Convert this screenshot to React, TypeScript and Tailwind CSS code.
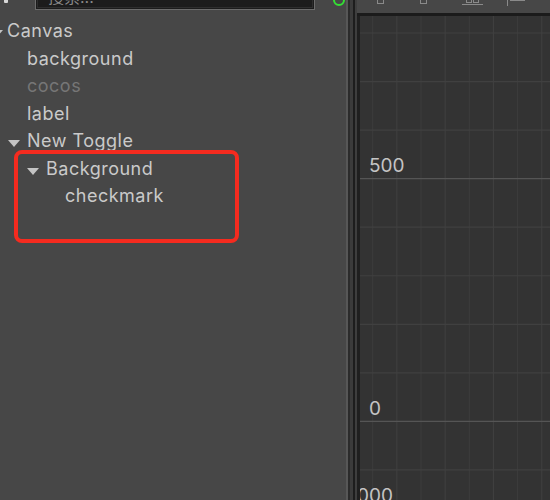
import React from "react";

const rows: { label: string; indent: number; arrow?: boolean; dim?: boolean }[] = [
  { label: "Canvas", indent: 0, arrow: true },
  { label: "background", indent: 1 },
  { label: "cocos", indent: 1, dim: true },
  { label: "label", indent: 1 },
  { label: "New Toggle", indent: 1, arrow: true },
  { label: "Background", indent: 2, arrow: true },
  { label: "checkmark", indent: 3 },
];

const indentClass = ["pl-[7px]", "pl-[27px]", "pl-[46px]", "pl-[65px]"];

function Arrow({ root }: { root?: boolean }) {
  return (
    <svg
      width="12"
      height="8"
      viewBox="0 0 12 8"
      className={`absolute top-[10px] ${root ? "left-[-16px]" : "left-[-19px]"}`}
    >
      <path d="M0 0 L12 0 L6 7 Z" fill="#c4c4c4" />
    </svg>
  );
}

function Grid() {
  const hs: number[] = [];
  for (let i = 0; i < 10; i++) hs.push(17 + i * 48.55);
  const vs: number[] = [];
  for (let i = 0; i < 9; i++) vs.push(12.7 + i * 24.15);
  return (
    <svg className="absolute inset-0" width="193" height="485">
      {vs.map((x, i) => (
        <line key={"v" + i} x1={x} y1={0} x2={x} y2={485} stroke={i % 2 === 0 ? "#3d3d3d" : "#404040"} strokeWidth="1" />
      ))}
      {hs.map((y, i) => (
        <line key={"h" + i} x1={0} y1={y} x2={193} y2={y} stroke={i === 3 || i === 8 ? "#555555" : "#404040"} strokeWidth="1.2" />
      ))}
    </svg>
  );
}

export default function App() {
  return (
    <div
      className="w-[550px] h-[500px] flex overflow-hidden bg-[#474747]"
      style={{ fontFamily: "Inter, 'Noto Sans CJK SC', sans-serif" }}
    >
      {/* Left hierarchy panel */}
      <div className="w-[346px] shrink-0 flex flex-col bg-[#474747] relative">
        <div className="h-[10px] relative overflow-hidden">
          <div className="absolute left-[4px] top-[-6px] w-[4px] h-[9px] bg-[#d8d8d8] rounded-[1px]" />
          <div className="absolute left-[35px] top-[-17px] w-[280px] h-[27px] border border-[#6c6c6c] bg-[#1c1c1c] flex items-center pl-[12px]">
            <div className="absolute inset-[1px] border border-[#2e2e2e]" />
            <span className="text-[16px] text-[#8a8a8a] leading-none">搜索...</span>
          </div>
          <svg className="absolute left-[332px] top-[-7px]" width="14" height="14" viewBox="0 0 14 14">
            <circle cx="7" cy="7" r="5" fill="none" stroke="#34e034" strokeWidth="2" />
          </svg>
        </div>
        <div className="pt-[7px] flex flex-col">
          {rows.map((r, i) => (
            <div
              key={i}
              className={`h-[27.5px] leading-[27px] text-[18px] tracking-[0.5px] whitespace-nowrap ${indentClass[r.indent]} ${
                r.dim ? "text-[#767676]" : "text-[#cacaca]"
              }`}
            >
              <span className="relative">
                {r.arrow && <Arrow root={r.indent === 0} />}
                {r.label}
              </span>
            </div>
          ))}
        </div>
        <div className="absolute left-[14px] top-[150px] w-[225px] h-[93px] border-[4px] border-[#f52b1f] rounded-[8px]" />
      </div>

      {/* Divider */}
      <div className="w-[2px] shrink-0 bg-[#575757]" />
      <div className="w-[2px] shrink-0 bg-[#2b2b2b]" />
      <div className="w-[3px] shrink-0 bg-[#3b3b3b]" />
      <div className="w-[2px] shrink-0 bg-[#1d1d1d]" />
      <div className="w-[2px] shrink-0 bg-[#3e3e3e]" />

      {/* Scene panel */}
      <div className="flex-1 flex flex-col bg-[#454545]">
        <div className="h-[13px] relative overflow-hidden bg-[#474747]">
          <svg className="absolute left-[20px] top-[-6px]" width="18" height="12" viewBox="0 0 18 12">
            <rect x="0.5" y="0.5" width="6" height="9" fill="none" stroke="#8a8a8a" />
            <line x1="7" y1="3.5" x2="13" y2="3.5" stroke="#8a8a8a" />
          </svg>
          <svg className="absolute left-[63px] top-[-6px]" width="18" height="12" viewBox="0 0 18 12">
            <rect x="0.5" y="0.5" width="6" height="9" fill="none" stroke="#8a8a8a" />
            <line x1="7" y1="3.5" x2="13" y2="3.5" stroke="#8a8a8a" />
          </svg>
          <svg className="absolute left-[105px] top-[-6px]" width="22" height="12" viewBox="0 0 22 12">
            <rect x="4.5" y="0.5" width="5" height="8" fill="none" stroke="#8a8a8a" />
            <rect x="11.5" y="0.5" width="5" height="8" fill="none" stroke="#8a8a8a" />
            <line x1="0" y1="10.5" x2="21" y2="10.5" stroke="#8a8a8a" />
          </svg>
          <svg className="absolute left-[150px] top-[-6px]" width="22" height="12" viewBox="0 0 22 12">
            <line x1="0.5" y1="0" x2="0.5" y2="12" stroke="#8a8a8a" />
            <rect x="3.5" y="0.5" width="14" height="6" fill="none" stroke="#8a8a8a" />
          </svg>
        </div>
        <div className="h-[3px] bg-[#1b1b1b]" />
        <div className="flex-1 flex">
          <div className="w-[3px] bg-[#1f1f1f]" />
          <div className="flex-1 relative overflow-hidden bg-[#333333]">
            <Grid />
            <span className="absolute left-[9px] top-[138px] text-[19px] leading-[24px] text-[#c4c4c4]">500</span>
            <span className="absolute left-[9px] top-[381px] text-[19px] leading-[24px] text-[#c4c4c4]">0</span>
            <span className="absolute left-[-18px] top-[468px] w-[51px] text-right text-[19px] leading-[24px] text-[#c4c4c4]">1000</span>
          </div>
        </div>
      </div>
    </div>
  );
}
